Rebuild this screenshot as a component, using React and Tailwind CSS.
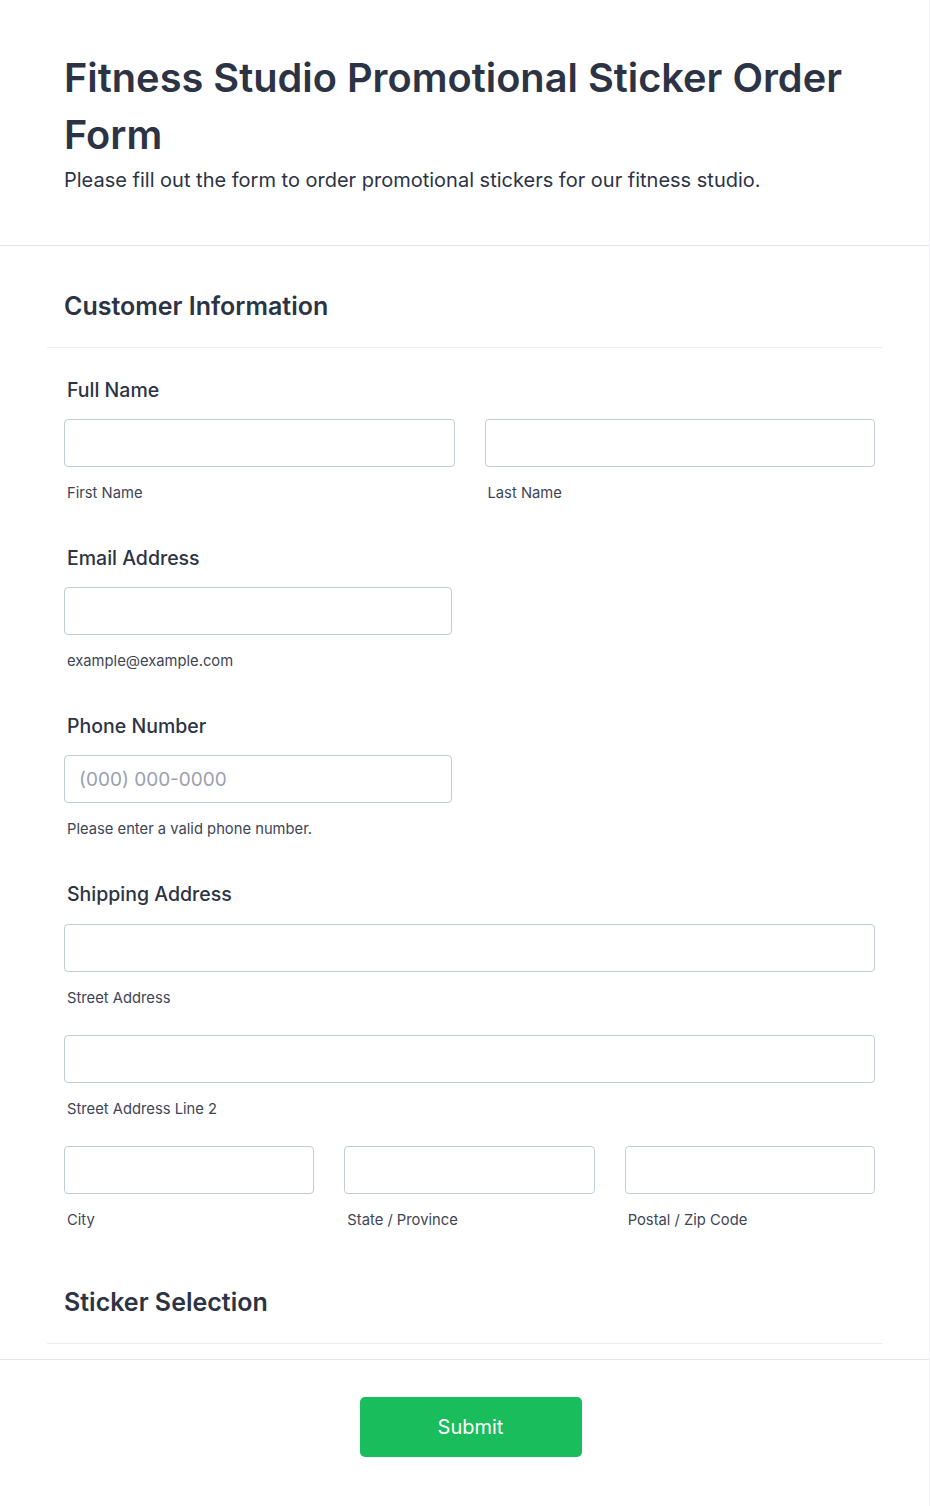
const font = { fontFamily: 'Inter, "Noto Sans", sans-serif' }

function Input({ className = '', placeholder }) {
  return (
    <input
      type="text"
      placeholder={placeholder}
      className={`h-[48px] rounded-[4px] border border-[#c3cad8] bg-white px-[14px] text-[19px] text-[#2c3345] placeholder:text-[#9aa0b0] outline-none ${className}`}
    />
  )
}

function Sub({ children }) {
  return <p className="mt-[14px] pl-[3px] text-[14.75px] leading-[24px] text-[#3e4556]">{children}</p>
}

function Label({ children }) {
  return <p className="pl-[3px] text-[19.5px] font-medium leading-[28px] text-[#2c3345]">{children}</p>
}

function SectionHead({ children }) {
  return (
    <div className="border-b border-[#ebebf3] pb-[25px] pl-[17px]">
      <h2 className="text-[25px] font-semibold leading-[32px] text-[#2c3345]">{children}</h2>
    </div>
  )
}

export default function App() {
  return (
    <div style={font} className="min-h-[1506px] w-[930px] border-r border-[#f2f2f6] bg-white">
      <header className="border-b border-[#e1e4ea] px-[64px] pt-[49px] pb-[51px]">
        <h1 className="text-[39.75px] font-semibold leading-[57px] text-[#2c3345]">
          Fitness Studio Promotional Sticker Order Form
        </h1>
        <p className="mt-[3px] text-[20px] leading-[28px] text-[#2c3345]">
          Please fill out the form to order promotional stickers for our fitness studio.
        </p>
      </header>

      <div className="mx-[47px] pt-[44px]">
        <SectionHead>Customer Information</SectionHead>

        <div className="pl-[17px] pr-[7px]">
          <div className="pt-[28px]">
            <Label>Full Name</Label>
            <div className="mt-[15px] grid grid-cols-2 gap-[30px]">
              <div>
                <Input className="w-full" />
                <Sub>First Name</Sub>
              </div>
              <div>
                <Input className="w-full" />
                <Sub>Last Name</Sub>
              </div>
            </div>
          </div>

          <div className="pt-[39px]">
            <Label>Email Address</Label>
            <Input className="mt-[15px] w-[388px]" />
            <Sub>example@example.com</Sub>
          </div>

          <div className="pt-[39px]">
            <Label>Phone Number</Label>
            <Input className="mt-[15px] w-[388px]" placeholder="(000) 000-0000" />
            <Sub>Please enter a valid phone number.</Sub>
          </div>

          <div className="pt-[39px]">
            <Label>Shipping Address</Label>
            <div className="mt-[16px] flex flex-col gap-[25px]">
              <div>
                <Input className="w-full" />
                <Sub>Street Address</Sub>
              </div>
              <div>
                <Input className="w-full" />
                <Sub>Street Address Line 2</Sub>
              </div>
              <div className="grid grid-cols-3 gap-[30px]">
                <div>
                  <Input className="w-full" />
                  <Sub>City</Sub>
                </div>
                <div>
                  <Input className="w-full" />
                  <Sub>State / Province</Sub>
                </div>
                <div>
                  <Input className="w-full" />
                  <Sub>Postal / Zip Code</Sub>
                </div>
              </div>
            </div>
          </div>
        </div>

        <div className="pt-[54px] pb-[15px]">
          <SectionHead>Sticker Selection</SectionHead>
        </div>
      </div>

      <div className="flex justify-center border-t border-[#e4e4ee] pt-[37px] pl-[12px]">
        <button
          type="button"
          className="h-[60px] w-[222px] rounded-[5px] bg-[#1abd5c] text-[20px] text-white"
        >
          Submit
        </button>
      </div>
    </div>
  )
}
